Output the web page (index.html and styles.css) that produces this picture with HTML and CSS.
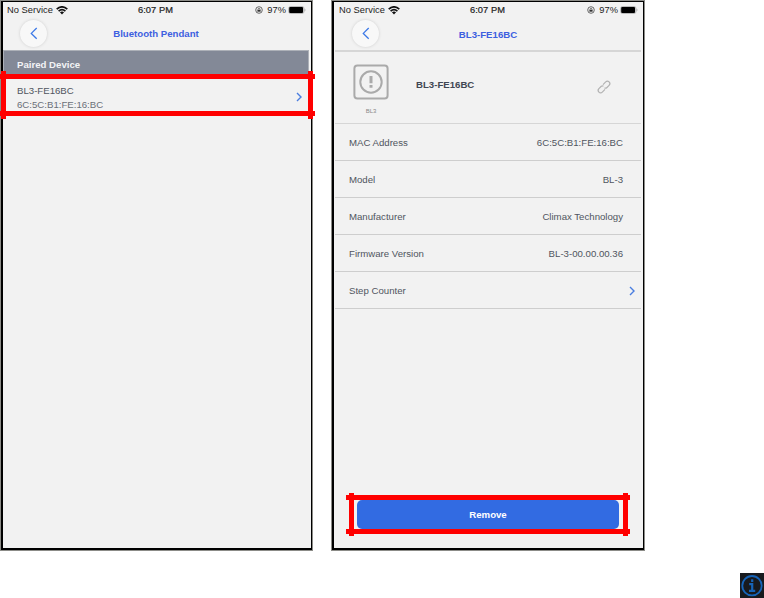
FILE: index.html
```
<!DOCTYPE html>
<html lang="en">
<head>
<meta charset="utf-8">
<title>Bluetooth Pendant</title>
<link rel="stylesheet" href="styles.css">
</head>
<body>
<svg class="defs" aria-hidden="true">
  <symbol id="wifi" viewBox="0 0 12 9"><path d="M.7 3.2Q6-1.5 11.3 3.2M2.6 5.1Q6 2.1 9.4 5.1" fill="none" stroke="#111" stroke-width="1.7"/><path d="M3.9 6.3Q6 4.6 8.1 6.3L6 8.6z" fill="#111"/></symbol>
  <symbol id="lock" viewBox="0 0 8 8"><circle cx="4" cy="4" r="3.3" fill="none" stroke="#444" stroke-width=".8"/><path d="M2.4 3.8h3.2v1.9H2.4z" fill="#333"/><path d="M3 3.8V2.9q1-1.3 2 0v.9" fill="none" stroke="#333" stroke-width=".6"/></symbol>
  <symbol id="battery" viewBox="0 0 18 8"><rect x=".6" y=".5" width="15.4" height="7" rx="2" fill="#ccc" stroke="#bbb" stroke-width="1"/><rect x="1.2" y="1.1" width="13.8" height="5.8" rx="1" fill="#000"/><path d="M16.7 2.6q1.4 1.4 0 2.8z" fill="#999"/></symbol>
  <symbol id="back" viewBox="0 0 8 13"><path d="M6.7 1 1.3 6.4l5.4 5.4" fill="none" stroke="#3b78e7" stroke-width="1.3"/></symbol>
  <symbol id="next" viewBox="0 0 6 10"><path d="m1 1 4 4-4 4" fill="none" stroke="#4a7de0" stroke-width="1.4"/></symbol>
</svg>
<main class="page">
  <section class="phone list">
    <div class="screen">
      <div class="status"><span class="carrier">No Service</span><svg class="wifi"><use href="#wifi"/></svg><span class="time">6:07 PM</span><svg class="lock"><use href="#lock"/></svg><span class="percent">97%</span><svg class="battery"><use href="#battery"/></svg></div>
      <header class="nav"><span class="back"><svg><use href="#back"/></svg></span><h1>Bluetooth Pendant</h1></header>
      <h2 class="group">Paired Device</h2>
      <div class="device"><div class="lines"><p class="name">BL3-FE16BC</p><p class="mac">6C:5C:B1:FE:16:BC</p></div><svg class="next"><use href="#next"/></svg></div>
    </div>
    <div class="mark mark-device"><i class="left"></i><i class="right"></i></div>
  </section>
  <section class="phone detail">
    <div class="screen">
      <div class="status"><span class="carrier">No Service</span><svg class="wifi"><use href="#wifi"/></svg><span class="time">6:07 PM</span><svg class="lock"><use href="#lock"/></svg><span class="percent">97%</span><svg class="battery"><use href="#battery"/></svg></div>
      <header class="nav"><span class="back"><svg><use href="#back"/></svg></span><h1>BL3-FE16BC</h1></header>
      <div class="summary">
        <div class="pic"><svg viewBox="0 0 36 36"><rect x="1.4" y="1.4" width="33.2" height="33.2" rx="3" fill="none" stroke="#aaa" stroke-width="2"/><circle cx="18" cy="18" r="10.7" fill="none" stroke="#aaa" stroke-width="2"/><path d="M18 12v7.3M18 21v2.8" stroke="#aaa" stroke-width="3"/></svg><span>BL3</span></div>
        <strong>BL3-FE16BC</strong>
        <svg class="link" viewBox="0 0 14 14"><g transform="rotate(-45 7 7)" fill="none" stroke="#b2b2b2" stroke-width="1.2"><path d="M6 9.4H2.2a2.4 2.4 0 0 1 0-4.8H5.6q1.4 0 1.6 1.4M8 4.6h3.8a2.4 2.4 0 0 1 0 4.8H8.4q-1.4 0-1.6-1.4"/></g></svg>
      </div>
      <dl>
        <div><dt>MAC Address</dt><dd>6C:5C:B1:FE:16:BC</dd></div>
        <div><dt>Model</dt><dd>BL-3</dd></div>
        <div><dt>Manufacturer</dt><dd>Climax Technology</dd></div>
        <div><dt>Firmware Version</dt><dd>BL-3-00.00.00.36</dd></div>
        <div><dt>Step Counter</dt><dd class="arrow"><svg class="next"><use href="#next"/></svg></dd></div>
      </dl>
      <button>Remove</button>
    </div>
    <div class="mark mark-remove"><i class="left"></i><i class="right"></i></div>
  </section>
</main>
<svg class="info" viewBox="0 0 24 25"><rect width="24" height="25" fill="#181a1e"/><circle cx="12" cy="12.7" r="9.7" fill="none" stroke="#1764b8" stroke-width="1.8"/><path d="M12.2 6.3v2.8M9.2 11.2h3v6.3M9 17.8h6.2" fill="none" stroke="#1764b8" stroke-width="2.2"/></svg>
</body>
</html>
```
FILE: styles.css
```
* { box-sizing: border-box; }
body { margin: 0; width: 764px; height: 598px; overflow: hidden; background: #fff; font: 9.65px/12px "Liberation Sans", Arial, sans-serif; color: #505560; }
h1, h2, p, dl, dd { margin: 0; }
svg { display: block; flex: none; }
.defs { display: none; }
.page { display: flex; gap: 18px; }
.phone { position: relative; width: 313px; height: 551px; padding: 1px; background: #8c8c88; }
.screen { display: flex; flex-direction: column; width: 311px; height: 549px; padding: 0 2px 0 1px; border: 1px solid #000; border-width: 1px 1px 2px 2px; background: #f2f2f2; }
.list .screen { padding: 0 2px 0 0; border-left-width: 2px; }
.detail { width: 314px; }
.detail .screen { width: 312px; }
.status { display: flex; align-items: center; height: 16px; padding: 0 3px 0 4px; color: #222; font-size: 9.3px; letter-spacing: .05px; }
.carrier { width: 47px; white-space: nowrap; }
.wifi { width: 12px; height: 9px; margin-left: 2px; }
.time { margin-left: 70px; width: 38px; white-space: nowrap; -webkit-text-stroke: .2px #222; }
.lock { width: 8px; height: 8px; margin-left: auto; }
.percent { margin: 0 2px 0 4px; }
.battery { width: 18px; height: 8px; }
.nav { position: relative; display: flex; align-items: center; justify-content: center; height: 32px; padding-top: 1px; }
.list .nav { padding: 0 0 1px; }
.nav h1 { font-size: 9.65px; line-height: 12px; color: #3d5fe0; }
.back { position: absolute; left: 17px; top: 2px; display: flex; align-items: center; justify-content: center; width: 27px; height: 27px; border-radius: 50%; background: #f8f8f8; box-shadow: 0 0 3px #ccc; }
.back svg { width: 8px; height: 13px; }
.group { height: 29px; padding: 8px 13px 0; border: 1px solid #adb1b8; background: #838997; color: #f3f4f6; font-size: 9.65px; line-height: 12px; }
.device { display: flex; align-items: center; justify-content: space-between; height: 36px; padding: 1px 7px 0 14px; }
.lines p { height: 14px; line-height: 14px; }
.mac { color: #6b7078; }
.device .next { margin-top: -2px; }
.next { width: 6px; height: 10px; }
.summary { display: flex; align-items: center; height: 74.5px; padding: 0 30px 0 18px; border: solid #d6d6d6; border-width: 2px 0 1px; margin-top: -.5px; }
.pic { display: flex; flex-direction: column; align-items: center; width: 36px; padding-top: 5px; }
.pic svg { width: 36px; height: 36px; }
.pic span { margin-top: 7px; font-size: 6px; line-height: 8px; color: #888; }
.summary strong { margin-left: 27px; margin-top: -5px; color: #414753; font-size: 9.65px; }
.link { width: 14px; height: 14px; margin: -1px 0 0 auto; overflow: visible; }
dl div { display: flex; justify-content: space-between; align-items: center; height: 37.1px; padding: 2px 18px 0 14px; border-bottom: 1px solid #cecece; }
.arrow { margin-right: -12px; }
button { width: 262px; height: 29px; margin: auto 0 19px 22px; padding: 0; border: 0; border-radius: 5px; background: #326be2; color: #fff; font: bold 9.65px/12px "Liberation Sans", Arial, sans-serif; }
.mark { position: absolute; border: solid #f00; border-width: 5px 0; }
.mark i { position: absolute; width: 5px; background: #f00; }
.mark-device { left: 0; top: 74px; width: 315px; height: 42px; }
.mark-device i { top: -8px; height: 48px; }
.mark-device .left { left: 1px; }
.mark-device .right { left: 308px; }
.mark-remove { left: 15px; top: 495px; width: 284px; height: 39px; }
.mark-remove i { top: -7px; height: 43px; }
.mark-remove .left { left: 3px; }
.mark-remove .right { left: 277px; }
.info { position: absolute; left: 740px; top: 573px; width: 24px; height: 25px; }
```
